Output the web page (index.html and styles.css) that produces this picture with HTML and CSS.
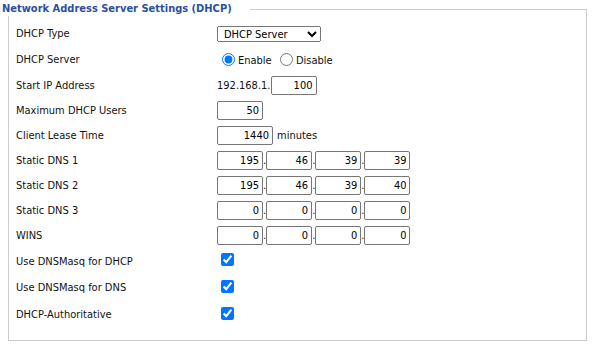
FILE: index.html
```html
<!DOCTYPE html>
<html lang="en">
<head>
<meta charset="utf-8">
<title>DHCP Settings</title>
<link rel="stylesheet" href="styles.css">
</head>
<body>
<fieldset class="panel">
  <legend class="panel-title">Network Address Server Settings (DHCP)</legend>
  <div class="row">
    <div class="label">DHCP Type</div>
    <div class="value"><select class="select"><option>DHCP Server</option><option>DHCP Forwarder</option></select></div>
  </div>
  <div class="row row-tall">
    <div class="label">DHCP Server</div>
    <div class="value"><input class="radio" type="radio" name="srv" checked><span class="opt">Enable</span> <input class="radio" type="radio" name="srv"><span class="opt">Disable</span></div>
  </div>
  <div class="row">
    <div class="label">Start IP Address</div>
    <div class="value">192.168.1.<input class="num" type="text" value="100"></div>
  </div>
  <div class="row">
    <div class="label">Maximum DHCP Users</div>
    <div class="value"><input class="num" type="text" value="50"></div>
  </div>
  <div class="row">
    <div class="label">Client Lease Time</div>
    <div class="value"><input class="num num-wide" type="text" value="1440"><span class="unit">minutes</span></div>
  </div>
  <div class="row">
    <div class="label">Static DNS 1</div>
    <div class="value"><input class="num" type="text" value="195">.<input class="num" type="text" value="46">.<input class="num" type="text" value="39">.<input class="num" type="text" value="39"></div>
  </div>
  <div class="row">
    <div class="label">Static DNS 2</div>
    <div class="value"><input class="num" type="text" value="195">.<input class="num" type="text" value="46">.<input class="num" type="text" value="39">.<input class="num" type="text" value="40"></div>
  </div>
  <div class="row">
    <div class="label">Static DNS 3</div>
    <div class="value"><input class="num" type="text" value="0">.<input class="num" type="text" value="0">.<input class="num" type="text" value="0">.<input class="num" type="text" value="0"></div>
  </div>
  <div class="row">
    <div class="label">WINS</div>
    <div class="value"><input class="num" type="text" value="0">.<input class="num" type="text" value="0">.<input class="num" type="text" value="0">.<input class="num" type="text" value="0"></div>
  </div>
  <div class="row row-check-first">
    <div class="label">Use DNSMasq for DHCP</div>
    <div class="value"><input class="check" type="checkbox" checked></div>
  </div>
  <div class="row row-check">
    <div class="label">Use DNSMasq for DNS</div>
    <div class="value"><input class="check" type="checkbox" checked></div>
  </div>
  <div class="row row-check">
    <div class="label">DHCP-Authoritative</div>
    <div class="value"><input class="check" type="checkbox" checked></div>
  </div>
</fieldset>
</body>
</html>
```

FILE: styles.css
```css
html, body {
  margin: 0;
  padding: 0;
  background: #fff;
}
body {
  font-family: "DejaVu Sans Condensed", "DejaVu Sans", sans-serif;
  font-size: 11px;
  color: #111;
}
.panel {
  box-sizing: border-box;
  width: 579px;
  margin: 2px 0 0 8px;
  padding: 5px 7px 12px 7px;
  border: 1px solid #cccccc;
  min-width: 0;
}
.panel-title {
  margin-left: -14px;
  padding: 0 18px 0 0;
  background: #fff;
  font-weight: bold;
  font-size: 11px;
  line-height: 14px;
  color: #2a50a0;
}
.row {
  display: flex;
  align-items: center;
  height: 25px;
}
.row-tall {
  height: 27px;
}
.row-check-first {
  height: 26px;
}
.row-check {
  height: 27px;
}
.label {
  width: 201px;
  flex: none;
}
.value {
  white-space: nowrap;
}
.select {
  width: 104px;
  height: 16px;
  font-family: inherit;
  font-size: 11px;
  padding: 0 0 0 2px;
  color: #000;
}
.radio {
  margin: 0 3px 0 5px;
  vertical-align: -2px;
}
.num {
  box-sizing: border-box;
  width: 46px;
  height: 19px;
  padding: 0 3px;
  font-family: inherit;
  font-size: 11px;
  text-align: right;
  color: #000;
  border: 1px solid #767676;
  border-radius: 2px;
}
.num-wide {
  width: 56px;
}
.unit {
  margin-left: 4px;
}
.check {
  margin: 0 0 0 4px;
  width: 13px;
  height: 13px;
}
```
